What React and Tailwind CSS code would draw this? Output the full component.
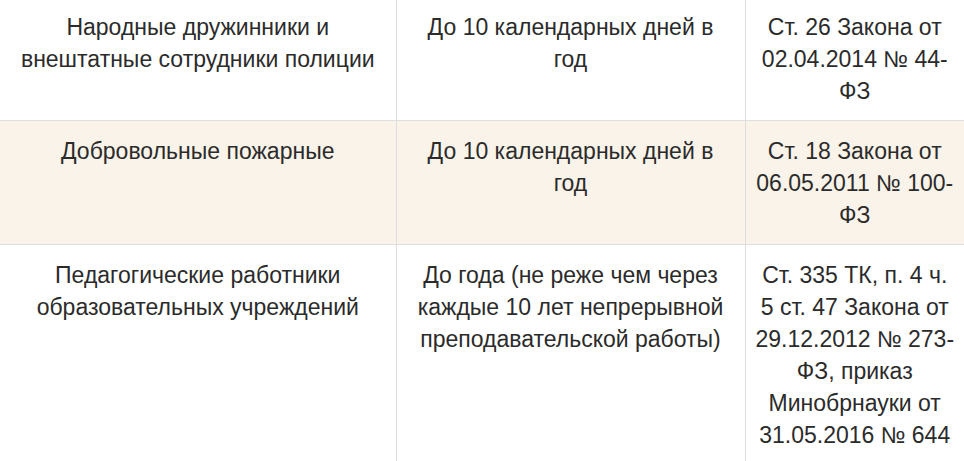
import React from "react";

const rows = [
  {
    who: "Народные дружинники и внештатные сотрудники полиции",
    term: "До 10 календарных дней в год",
    law: "Ст. 26 Закона от 02.04.2014 № 44-ФЗ",
  },
  {
    who: "Добровольные пожарные",
    term: "До 10 календарных дней в год",
    law: "Ст. 18 Закона от 06.05.2011 № 100-ФЗ",
  },
  {
    who: "Педагогические работники образовательных учреждений",
    term: "До года (не реже чем через каждые 10 лет непрерывной преподавательской работы)",
    law: "Ст. 335 ТК, п. 4 ч. 5 ст. 47 Закона от 29.12.2012 № 273-ФЗ, приказ Минобрнауки от 31.05.2016 № 644",
  },
];

const App = () => {
  return (
    <div className="w-[964px] h-[461px] overflow-hidden bg-white">
      <table
        className="-mt-[4px] w-[964px] table-fixed border-collapse text-center text-[23px] leading-[32px] text-[#2b2b2b]"
        style={{ fontFamily: '"Liberation Sans", Arial, sans-serif' }}
      >
        <colgroup>
          <col className="w-[396px]" />
          <col className="w-[349px]" />
          <col />
        </colgroup>
        <tbody>
          {rows.map((row, index) => (
            <tr
              key={index}
              className={`border-t border-[#dedede] ${index === 1 ? "bg-[#faf3e9]" : "bg-white"}`}
            >
              <td className="border-r border-[#dedede] px-[12px] pt-[14px] pb-[13px] align-top">
                {row.who}
              </td>
              <td className="border-r border-[#dedede] px-[15px] pt-[14px] pb-[13px] align-top">
                {row.term}
              </td>
              <td className="px-[9px] pt-[14px] pb-[13px] align-top">
                {row.law}
              </td>
            </tr>
          ))}
        </tbody>
      </table>
    </div>
  );
};

export default App;
